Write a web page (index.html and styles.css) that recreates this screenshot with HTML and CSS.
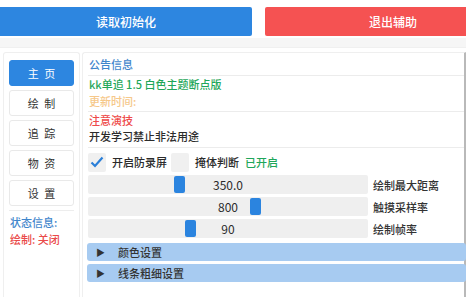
FILE: index.html
```html
<!DOCTYPE html>
<html>
<head>
    <title>kk单追</title>
    <link rel="stylesheet" href="styles.css">
</head>
<body>
    <div class="topbar">
        <div class="top-btn blue">读取初始化</div>
        <div class="top-btn red">退出辅助</div>
    </div>
    <div class="strip"></div>

    <div class="main">
        <div class="side">
            <div class="nav active">主 页</div>
            <div class="nav">绘 制</div>
            <div class="nav">追 踪</div>
            <div class="nav">物 资</div>
            <div class="nav">设 置</div>
            <div class="side-sep"></div>
            <div class="status-title">状态信息:</div>
            <div class="status-off">绘制: 关闭</div>
        </div>

        <div class="content">
            <div class="row row-title">
                <div class="txt blue-txt">公告信息</div>
            </div>
            <div class="row row-info">
                <div class="txt green-txt">kk单追 1.5 白色主题断点版</div>
                <div class="txt orange-txt">更新时间:</div>
            </div>
            <div class="row row-note">
                <div class="txt red-txt">注意演技</div>
                <div class="txt">开发学习禁止非法用途</div>
            </div>

            <div class="checks">
                <span class="check on">
                    <svg width="14" height="12" viewBox="0 0 14 12"><path d="M1.5 6.5 L5 10 L12.5 1.5" fill="none" stroke="#2a7fd8" stroke-width="2.2"/></svg>
                </span>
                <span class="check-label">开启防录屏</span>
                <span class="check"></span>
                <span class="check-label">掩体判断</span>
                <span class="check-state">已开启</span>
            </div>

            <div class="slider-row">
                <div class="slider">
                    <span class="grab" style="left: 86px"></span>
                    <span class="value">350.0</span>
                </div>
                <span class="slider-label">绘制最大距离</span>
            </div>
            <div class="slider-row">
                <div class="slider">
                    <span class="grab" style="left: 162px"></span>
                    <span class="value">800</span>
                </div>
                <span class="slider-label">触摸采样率</span>
            </div>
            <div class="slider-row">
                <div class="slider">
                    <span class="grab" style="left: 97px"></span>
                    <span class="value">90</span>
                </div>
                <span class="slider-label">绘制帧率</span>
            </div>

            <div class="header"><span class="arrow">&#9654;</span>颜色设置</div>
            <div class="header"><span class="arrow">&#9654;</span>线条粗细设置</div>
        </div>
    </div>
</body>
</html>
```

FILE: styles.css
```css
body {
    margin: 0;
    width: 466px;
    height: 297px;
    overflow: hidden;
    background: #fff;
    font-family: "Noto Sans CJK SC", "Noto Sans", sans-serif;
    font-size: 11px;
    color: #2b2b2b;
}

.topbar {
    display: flex;
    gap: 13px;
    padding-top: 7px;
    height: 29px;
}

.top-btn {
    flex: 0 0 auto;
    height: 29px;
    line-height: 29px;
    text-align: center;
    color: #fff;
    font-size: 12px;
    font-weight: 500;
}

.top-btn.blue {
    width: 252px;
    background: #2d86e0;
    border-radius: 0 2px 2px 0;
}

.top-btn.red {
    width: 146px;
    padding-left: 55px;
    background: #f55252;
    border-radius: 2px 0 0 2px;
}

.strip {
    margin-top: 2px;
    height: 9px;
    background: #f6f6f6;
    border-bottom: 1px solid #f0f0f0;
}

.main {
    display: flex;
    gap: 2px;
    padding: 4px 0 0 3px;
    height: 245px;
}

.side {
    width: 65px;
    padding: 7px 5px 0 5px;
    border: 1px solid #efefef;
    border-bottom: none;
    border-radius: 3px 3px 0 0;
}

.nav {
    height: 24px;
    line-height: 24px;
    margin-bottom: 4px;
    text-align: center;
    border: 1px solid #e9e9e9;
    border-radius: 3px;
    background: #fff;
    color: #333;
    word-spacing: 3px;
}

.nav.active {
    background: #2d86e0;
    border-color: #2d86e0;
    color: #fff;
}

.side-sep {
    margin-top: 1px;
    border-top: 1px solid #ededed;
}

.status-title {
    margin-top: 3px;
    padding-left: 1px;
    line-height: 17px;
    font-weight: 500;
    color: #3f86cc;
}

.status-off {
    padding-left: 1px;
    line-height: 17px;
    font-weight: 500;
    color: #ea4a4a;
}

.content {
    flex: 1;
    padding: 0 0 0 5px;
    border: 1px solid #efefef;
    border-right: 2px solid #b9b9b9;
    border-bottom: none;
    border-radius: 3px 0 0 0;
}

.row {
    border-bottom: 1px solid #ececec;
    padding-left: 1px;
}

.row-title {
    height: 22px;
    line-height: 22px;
}

.row-info {
    height: 35px;
    line-height: 17px;
}

.row-note {
    height: 35px;
    line-height: 16px;
}

.txt {
    font-weight: 500;
}

.blue-txt {
    color: #3f86cc;
}

.green-txt {
    color: #1fa75a;
}

.orange-txt {
    color: #f6c88a;
}

.red-txt {
    color: #ee4a4a;
}

.checks {
    display: flex;
    align-items: center;
    margin-top: 4px;
    height: 20px;
}

.check {
    display: flex;
    align-items: center;
    justify-content: center;
    width: 18px;
    height: 19px;
    background: #f0f0f0;
    border-radius: 2px;
}

.check-label {
    margin: 0 4px 0 6px;
    font-weight: 500;
}

.check-state {
    margin-left: 2px;
    color: #1fa75a;
    font-weight: 500;
}

.slider-row {
    display: flex;
    align-items: center;
    gap: 5px;
    margin-top: 3px;
}

.slider-row:first-of-type {
    margin-top: 4px;
}

.slider {
    position: relative;
    width: 280px;
    height: 19px;
    line-height: 19px;
    background: #efefef;
    border-radius: 2px;
    text-align: center;
    font-size: 12px;
}

.grab {
    position: absolute;
    top: 1px;
    width: 11px;
    height: 17px;
    background: #2b84df;
    border-radius: 2px;
}

.value {
    position: relative;
}

.slider-label {
    font-weight: 500;
    color: #333;
}

.header {
    display: flex;
    align-items: center;
    height: 18px;
    margin: 5px -2px 3px -1px;
    background: #a7cbf1;
    border-radius: 3px;
    color: #333;
    font-weight: 500;
}

.header + .header {
    margin-top: 0;
}

.arrow {
    font-size: 9px;
    margin: 0 13px 0 9px;
}
```
